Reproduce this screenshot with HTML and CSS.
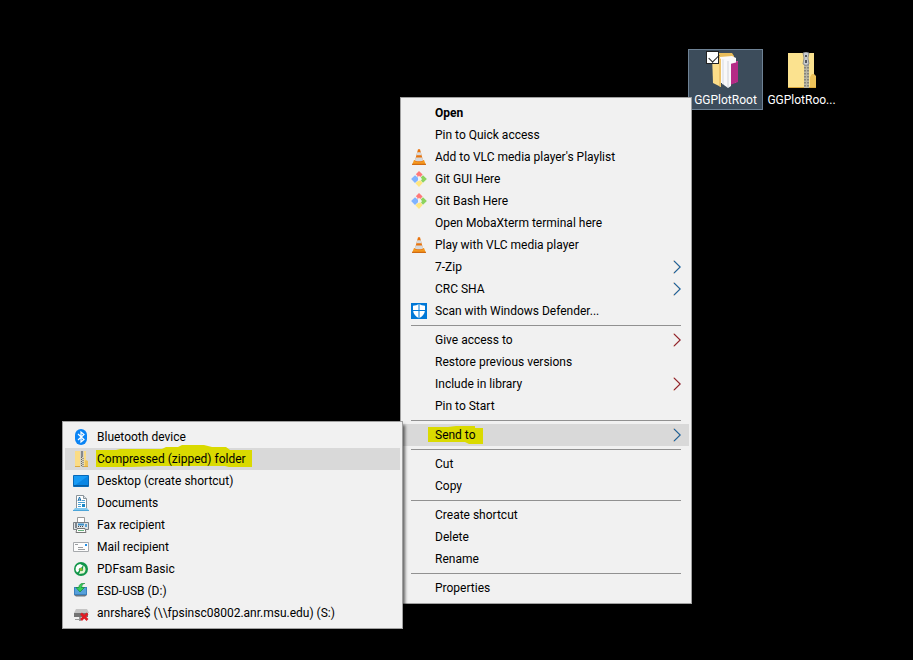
FILE: index.html
```html
<!DOCTYPE html>
<html lang="en">
<head>
<meta charset="utf-8">
<title>Desktop</title>
<link rel="stylesheet" href="styles.css">
</head>
<body>
<svg class="defs" aria-hidden="true">
  <symbol id="arrow" viewBox="0 0 8 14"><path d="M0.5 .8 6.8 7 .5 13.2" fill="none" stroke="#e09a5c" stroke-width="1"/><path d="M1 .8 7.3 7 1 13.2" fill="none" stroke="currentColor" stroke-width="1.1"/></symbol>
  <symbol id="vlc" viewBox="0 0 16 16"><path d="M3 11h10l1.900 4.800H1.100z" fill="#f59a20"/><path d="M1 14.800h14v1H1z" fill="#c85a00"/><path d="M7 .3h2L12.200 12.300q-4.200 2-8.400 0z" fill="#e8730c"/><path d="M6.300 3.200h3.400l1 3H5.300zM4.700 8.500h6.600l.9 2.900q-4.200 1.700-8.400 0z" fill="#d6d9dc"/></symbol>
  <symbol id="git" viewBox="0 0 16 16"><path d="M8 0l3.600 3.600-2.300 2.300L8 4.800 6.500 6.200 6.300 4.500 4.800 3.200z" fill="#ff7878"/><path d="M4 4.200l3 2.600v2.500L4 11.900.1 8z" fill="#80b3ff"/><path d="M12 4.200L15.900 8 12 11.800l-2-2L11 8l-1.300-1.400z" fill="#8dd35f"/><path d="M8 10l1.300-.7 2.300 2.800L8 16l-3.600-3.800 2.200-2z" fill="#ffe680"/></symbol>
</svg>
<main class="desktop">
  <div class="shortcut shortcut-folder">
    <input class="check" type="checkbox" checked aria-label="Select GGPlotRoot">
    <svg class="art" viewBox="0 0 28 37" aria-hidden="true"><path d="M5 1h15l2 3v25H8z" fill="#e8bd5b"/><path d="M19 10l7-1v20l-7 3z" fill="#b52a86"/><path d="M20 10l6-1v11l-6-5z" fill="#cc4b9e"/><path d="M8 5l12-1 4 2v25H8z" fill="#fafafa"/><path d="M18 12l8-2v20l-8 3z" fill="#b52a86"/><path d="M10 7l7 2v26l-7-3z" fill="#e7e9ed"/><path d="M12 8l7-2v28l-3 2-4-3z" fill="#f8f8fa"/><path d="M16 9v26" stroke="#cfd2d8"/><path d="M0 3l9 4v28L1 31z" fill="#fbdc88"/><path d="M7 6l2 1v28l-2-1z" fill="#edc36a"/></svg>
    <span class="caption">GGPlotRoot</span>
  </div>
  <div class="shortcut shortcut-zip">
    <svg class="art" viewBox="0 0 28 37" aria-hidden="true"><path d="M0 1h26v34H0z" fill="#fbe28f"/><path d="M22 36V25l2-3h2l2 2v12z" fill="#eec35a"/><path d="M0 35h28v1H0z" fill="#dba83c"/><path d="M16 8h5v28h-5z" fill="#b9b6a5"/><path d="M17 9v27M20 9v27" stroke="#77756c" stroke-width="1.500" stroke-dasharray="1.500 1.500"/><path d="M15 1q3-2 6 0l-1 5 1 6q-3 3-6 0l1-6z" fill="#c8cbce" stroke="#74777a" stroke-width=".7"/><path d="M17 3h2v2h-2zM17 8h2v3h-2z" fill="#55585c"/></svg>
    <span class="caption">GGPlotRoo...</span>
  </div>

  <menu class="menu menu-main">
    <li><button class="item default">Open</button></li>
    <li><button class="item">Pin to Quick access</button></li>
    <li><button class="item"><svg class="icon"><use href="#vlc"/></svg>Add to VLC media player's Playlist</button></li>
    <li><button class="item"><svg class="icon"><use href="#git"/></svg>Git GUI Here</button></li>
    <li><button class="item"><svg class="icon"><use href="#git"/></svg>Git Bash Here</button></li>
    <li><button class="item">Open MobaXterm terminal here</button></li>
    <li><button class="item"><svg class="icon"><use href="#vlc"/></svg>Play with VLC media player</button></li>
    <li><button class="item">7-Zip<svg class="arrow"><use href="#arrow"/></svg></button></li>
    <li><button class="item">CRC SHA<svg class="arrow"><use href="#arrow"/></svg></button></li>
    <li><button class="item"><svg class="icon" viewBox="0 0 16 16"><path d="M0 0h16v16H0z" fill="#0078d7"/><path d="M8 1q2.500 1.700 6 1.800v4.500Q13.500 12.500 8 15.200 2.500 12.500 2 7.300V2.800Q5.500 2.700 8 1z" fill="#fff"/><path d="M8 1v14M2 7.500h12" stroke="#0078d7"/></svg>Scan with Windows Defender...</button></li>
    <li class="rule"><hr></li>
    <li><button class="item">Give access to<svg class="arrow warm"><use href="#arrow"/></svg></button></li>
    <li><button class="item">Restore previous versions</button></li>
    <li><button class="item">Include in library<svg class="arrow warm"><use href="#arrow"/></svg></button></li>
    <li><button class="item">Pin to Start</button></li>
    <li class="rule"><hr></li>
    <li><button class="item active"><svg class="marker marker-send" viewBox="0 0 55 20"><path d="M0 2h20l8-1h19v2h8v16H41l-4-2H0z"/></svg><span class="label">Send to</span><svg class="arrow"><use href="#arrow"/></svg></button></li>
    <li class="rule"><hr></li>
    <li><button class="item">Cut</button></li>
    <li><button class="item">Copy</button></li>
    <li class="rule"><hr></li>
    <li><button class="item">Create shortcut</button></li>
    <li><button class="item">Delete</button></li>
    <li><button class="item">Rename</button></li>
    <li class="rule"><hr></li>
    <li><button class="item">Properties</button></li>
  </menu>

  <menu class="menu menu-send">
    <li><button class="item"><svg class="icon" viewBox="0 0 16 16"><rect x="2" width="12" height="16" rx="6" fill="#0a84f5"/><path d="M5 5l6 5.500L8 13V3l3 2.500L5 11" fill="none" stroke="#fff" stroke-width="1.200"/></svg>Bluetooth device</button></li>
    <li><button class="item active"><svg class="icon" viewBox="0 0 16 16"><path d="M2 0h11v15H2z" fill="#fbdc84"/><path d="M12 10l1-1 2 1v6h-3z" fill="#eec35a"/><path d="M2 15h13v1H2z" fill="#dba83c"/><path d="M7 0h4v16H7z" fill="#d5d2c4"/><path d="M8 0h2v6H8z" fill="#85888c"/><path d="M8.500 6v10M10 7v9" stroke="#66645c" stroke-dasharray="1 1"/></svg><svg class="marker marker-zip" viewBox="0 0 156 24"><path d="M0 5h20l4-1h42l4-2h12l4-2h22l8 2h14l4 3h22v17h-23l-4-1H60l-24 1H0z"/></svg><span class="label">Compressed (zipped) folder</span></button></li>
    <li><button class="item"><svg class="icon" viewBox="0 0 16 16"><path d="M.5 2.500h15v11H.5z" fill="#189bf5" stroke="#0869b8"/><path d="M1 13L15 3v10z" fill="#0a86e4"/><path d="M1 12h14v1H1z" fill="#075fa4"/></svg>Desktop (create shortcut)</button></li>
    <li><button class="item"><svg class="icon" viewBox="0 0 16 16"><path d="M3.500.5h7l3 3v10h-10z" fill="#fff" stroke="#8a9399"/><path d="M10.500.5v3h3" fill="#d9e4eb" stroke="#8a9399"/><path d="M5 6l1.500-4L8 6M5.500 5h2" fill="none" stroke="#176fae"/><path d="M5 7.500h7M5 9.500h3M5 11.500h3M9 5.500h3" stroke="#4ba0d2"/><path d="M9 9h3v3H9z" fill="#1787c7"/><path d="M2 13h12l2 2.500H0z" fill="#84c9ee"/><path d="M0 15h16v1H0z" fill="#4ba5d9"/></svg>Documents</button></li>
    <li><button class="item"><svg class="icon" viewBox="0 0 16 16"><path d="M4.500.5h7v5h-7z" fill="#fff" stroke="#999"/><path d="M.5 5.500h15v7H.5z" fill="#dfe3e6" stroke="#7a8086"/><path d="M2 6h2v5H2z" fill="#7d858c"/><path d="M5 6.500h6v2H5z" fill="#3d8fc9"/><path d="M5 9.500h1m1 0h1m1 0h1" stroke="#444"/><path d="M12 7h2v3h-2z" fill="#5a9fd0"/><path d="M4 11.500h8l1 4H3z" fill="#fff" stroke="#777"/><path d="M5 13.500h6" stroke="#66b17b"/></svg>Fax recipient</button></li>
    <li><button class="item"><svg class="icon" viewBox="0 0 16 16"><path d="M.5 3.500h15v9H.5z" fill="#fcfcfc" stroke="#a6a9ac"/><path d="M12 5h2v2h-2z" fill="#258fe6"/><path d="M2 5.500h3M5 8.500h5M5 10.500h7" stroke="#9a9da0"/></svg>Mail recipient</button></li>
    <li><button class="item"><svg class="icon" viewBox="0 0 16 16"><circle cx="8" cy="8" r="7" fill="#12964a"/><path d="M4 11.500A5 5 0 0 1 7 3l3 1.500-2 2.500-1-.3a2.500 2.500 0 0 0-1 3.300z" fill="#fff"/><path d="M10.500 4.500a5 5 0 0 1 .5 7.700L6 13 7.500 9.500l1.500.8a2.500 2.500 0 0 0 1-3z" fill="#e9f5d8"/><circle cx="8" cy="8.300" r="1.500" fill="#8abb2a"/></svg>PDFsam Basic</button></li>
    <li><button class="item"><svg class="icon" viewBox="0 0 16 16"><path d="M1 4h13v8H1z" fill="#3b80bd"/><path d="M2 5h11v6H2z" fill="#56a0db"/><path d="M1 12h13l-2 1.500H3z" fill="#667582"/><path d="M12 0Q8.500.7 8.500 4.500h3L7 9 3 4.500h2.800Q6 0 12 0z" fill="#38cf57" stroke="#138a38" stroke-width=".7"/></svg>ESD-USB (D:)</button></li>
    <li><button class="item"><svg class="icon" viewBox="0 0 16 16"><path d="M3 4h11l2 4H1z" fill="#c4c4c4"/><path d="M1 8h14v4H1z" fill="#737373"/><path d="M6 12h2v4H6zM2 14h5v1H2z" fill="#999"/><path d="M8 8.500l6.500 6.500M14.500 8.500L8 15" stroke="#e01b24" stroke-width="2.600"/></svg>anrshare$ (\\fpsinsc08002.anr.msu.edu) (S:)</button></li>
  </menu>
</main>
</body>
</html>
```

FILE: styles.css
```css
* { box-sizing: border-box; }

body {
  margin: 0;
  background: #000;
  font: 12px/22px Roboto, "Open Sans", sans-serif;
  color: #000;
}

.defs { position: absolute; width: 0; height: 0; }

.desktop {
  position: relative;
  min-height: 100vh;
  overflow: hidden;
}

.shortcut {
  position: absolute;
  top: 49px;
  width: 75px;
  height: 61px;
  padding-top: 2px;
  display: flex;
  flex-direction: column;
  align-items: center;
  border: 1px solid transparent;
  color: #fff;
}
.shortcut-folder { left: 688px; background: #3c4c5b; border-color: #6e8295; }
.shortcut-zip { left: 764px; }
.art { flex: none; width: 28px; height: 37px; }
.caption { flex: none; line-height: 22px; white-space: nowrap; }

.check {
  position: absolute;
  top: 1px;
  left: 17px;
  width: 13px;
  height: 13px;
  margin: 0;
  appearance: none;
  border: 1px solid #222;
  background: #fff;
}
.check:checked::after {
  content: "";
  position: absolute;
  top: 0;
  left: 4px;
  width: 5px;
  height: 9px;
  border: solid #222;
  border-width: 0 1px 1px 0;
  transform: rotate(45deg);
}

.menu {
  position: absolute;
  margin: 0;
  padding: 4px 2px;
  list-style: none;
  background: #f1f1f1;
  border: 1px solid #a0a0a0;
}
.menu-main { left: 400px; top: 97px; width: 292px; }
.menu-send {
  left: 62px;
  top: 421px;
  width: 341px;
  box-shadow: 2px 4px 3px rgba(0, 0, 0, 0.6);
}

.item {
  position: relative;
  display: flex;
  align-items: center;
  width: 100%;
  height: 22px;
  padding: 0 8px 0 32px;
  border: 0;
  background: none;
  color: inherit;
  font: inherit;
  text-align: left;
  white-space: nowrap;
}
.default { font-weight: 700; }
.active { background: #d9d9d9; }

.icon {
  position: absolute;
  left: 8px;
  top: 3px;
  width: 16px;
  height: 16px;
}
.arrow { width: 8px; height: 14px; margin-left: auto; color: #145f9e; }
.warm { color: #8c1c2c; }

.label { position: relative; }
.marker { position: absolute; fill: #dada00; }
.marker-send { left: 25px; top: 1px; width: 55px; height: 20px; }
.marker-zip { left: 31px; top: -3px; width: 156px; height: 24px; }

.rule { padding: 3px 8px; }
.rule hr { height: 1px; margin: 0; border: 0; background: #919191; }
```
